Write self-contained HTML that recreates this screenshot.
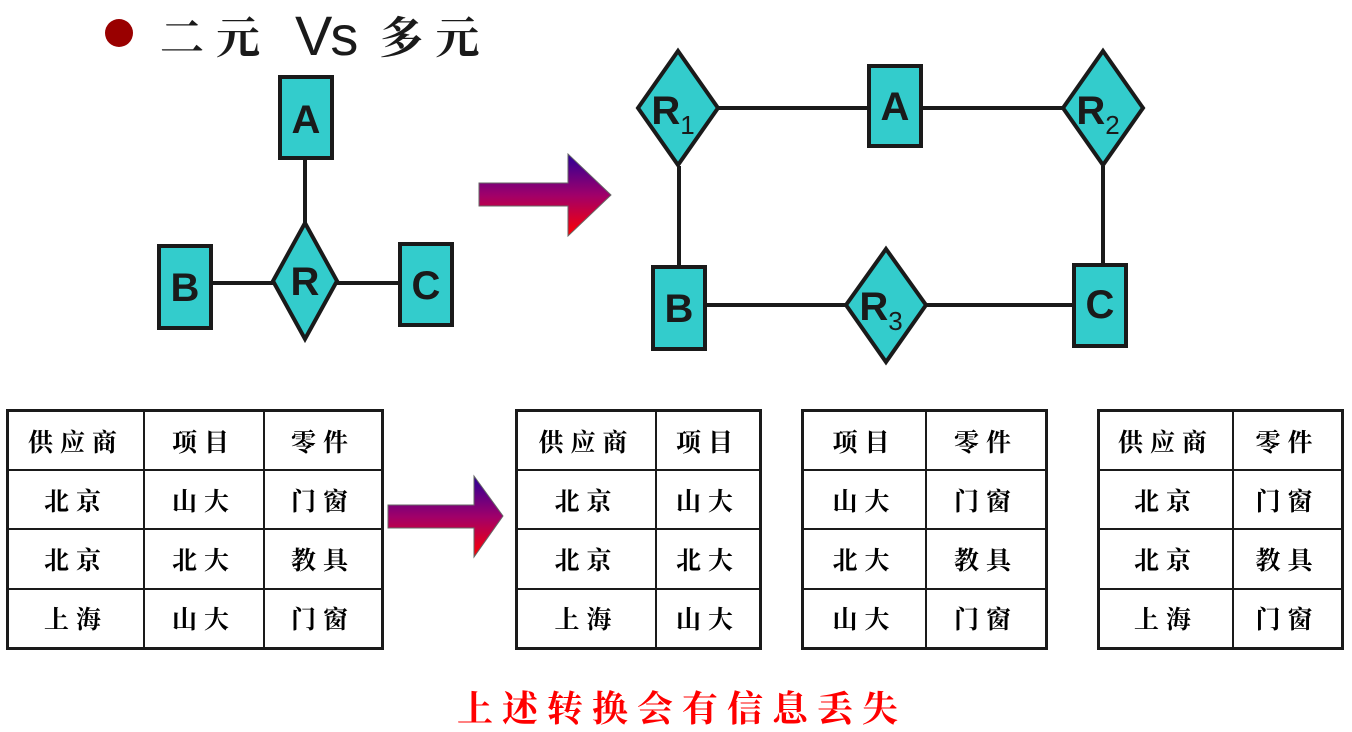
<!DOCTYPE html>
<html><head><meta charset="utf-8"><style>
body{margin:0;width:1352px;height:732px;background:#fff;position:relative;overflow:hidden;font-family:"Liberation Sans","Noto Serif CJK SC","Noto Sans CJK SC",serif;}
.t{position:absolute;border-collapse:collapse;border:3px solid #1a1a1a;}
.t td{border:2px solid #1a1a1a;text-align:center;font-size:25px;letter-spacing:7px;color:#000;font-weight:bold;font-family:"Noto Serif CJK SC",serif;padding:0;height:57px;}
</style></head><body>
<div style="position:absolute;left:105px;top:19px;width:28px;height:28px;border-radius:50%;background:#990000"></div>
<div style="position:absolute;left:160px;top:8px;font-size:44px;letter-spacing:12px;color:#1a1a1a;font-family:'Noto Serif CJK SC',serif;font-weight:bold;line-height:52px;white-space:nowrap">二元 <span style="font-family:'Liberation Sans',sans-serif;font-weight:normal;letter-spacing:-2px;font-size:56px;position:relative;top:2px">Vs</span> 多元</div>
<svg width="1352" height="400" style="position:absolute;left:0;top:0">
<defs><linearGradient id="g" x1="0" y1="0" x2="0" y2="1"><stop offset="0" stop-color="#2a0098"/><stop offset="0.5" stop-color="#a0006a"/><stop offset="1" stop-color="#ff0000"/></linearGradient></defs>
<g stroke="#1a1a1a" stroke-width="4" fill="#33cccc">
<line x1="305" y1="159" x2="305" y2="224"/><line x1="212" y1="283" x2="399" y2="283"/>
<rect x="280" y="77" width="52" height="81"/>
<rect x="159" y="246" width="52" height="82"/>
<rect x="400" y="244" width="52" height="81"/>
<polygon points="305,223 337,281 305,339 273,281"/>
<line x1="718" y1="108" x2="1063" y2="108"/><line x1="679" y1="166" x2="679" y2="267"/><line x1="1103" y1="166" x2="1103" y2="265"/><line x1="706" y1="305" x2="1073" y2="305"/>
<polygon points="678,51 718,108 678,165 638,108"/>
<polygon points="1103,51 1143,108 1103,165 1063,108"/>
<polygon points="886,249 926,305 886,362 846,305"/>
<rect x="869" y="66" width="52" height="80"/>
<rect x="653" y="267" width="52" height="82"/>
<rect x="1074" y="265" width="52" height="81"/>
</g>
<polygon points="479,183 568,183 568,154 611,195 568,236 568,206 479,206" fill="url(#g)" stroke="#666" stroke-width="1"/>
<g font-family="Liberation Sans,sans-serif" font-weight="bold" font-size="40" fill="#1a1a1a" text-anchor="middle">
<text x="306" y="133">A</text><text x="185" y="301">B</text><text x="426" y="299">C</text><text x="305" y="295">R</text>
<text x="895" y="120">A</text><text x="679" y="322">B</text><text x="1100" y="318">C</text>
<text x="673" y="124">R<tspan font-size="26" font-weight="normal" dy="10">1</tspan></text>
<text x="1098" y="124">R<tspan font-size="26" font-weight="normal" dy="10">2</tspan></text>
<text x="881" y="320">R<tspan font-size="26" font-weight="normal" dy="10">3</tspan></text>
</g>
</svg>
<svg width="120" height="90" style="position:absolute;left:385px;top:472px">
<defs><linearGradient id="g2" x1="0" y1="0" x2="0" y2="1"><stop offset="0" stop-color="#2a0098"/><stop offset="0.5" stop-color="#a0006a"/><stop offset="1" stop-color="#ff0000"/></linearGradient></defs>
<polygon points="3,33 89,33 89,4 118,44 89,85 89,56 3,56" fill="url(#g2)" stroke="#666" stroke-width="1"/>
</svg>
<table class="t" style="left:6px;top:409px;width:378px;height:241px"><tr><td style="width:134px">供应商</td><td style="width:118px">项目</td><td>零件</td></tr><tr><td>北京</td><td>山大</td><td>门窗</td></tr><tr><td>北京</td><td>北大</td><td>教具</td></tr><tr><td>上海</td><td>山大</td><td>门窗</td></tr></table>
<table class="t" style="left:515px;top:409px;width:247px;height:241px"><tr><td style="width:137px">供应商</td><td>项目</td></tr><tr><td>北京</td><td>山大</td></tr><tr><td>北京</td><td>北大</td></tr><tr><td>上海</td><td>山大</td></tr></table>
<table class="t" style="left:801px;top:409px;width:247px;height:241px"><tr><td style="width:121px">项目</td><td>零件</td></tr><tr><td>山大</td><td>门窗</td></tr><tr><td>北大</td><td>教具</td></tr><tr><td>山大</td><td>门窗</td></tr></table>
<table class="t" style="left:1097px;top:409px;width:247px;height:241px"><tr><td style="width:132px">供应商</td><td>零件</td></tr><tr><td>北京</td><td>门窗</td></tr><tr><td>北京</td><td>教具</td></tr><tr><td>上海</td><td>门窗</td></tr></table>
<div style="position:absolute;left:457px;top:684px;font-size:36px;letter-spacing:9px;color:#ff0000;font-weight:bold;font-family:'Noto Serif CJK SC',serif;line-height:46px;white-space:nowrap">上述转换会有信息丢失</div>
</body></html>
